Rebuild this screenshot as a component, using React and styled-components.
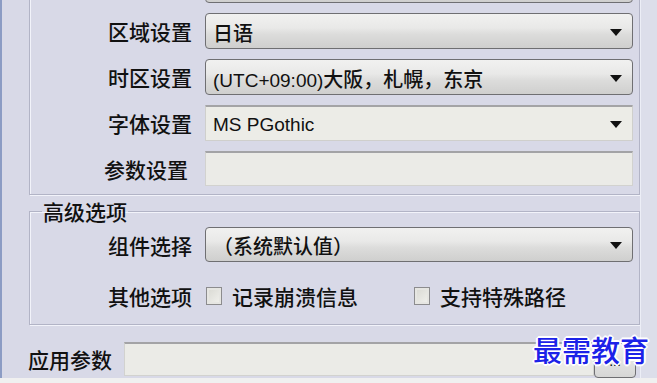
import styled, { createGlobalStyle } from "styled-components";

const GlobalStyle = createGlobalStyle`
    html, body {
        margin: 0;
        padding: 0;
        background: #f0f0f0;
        overflow: hidden;
    }
`;

const FONT = `"Noto Sans CJK SC", "Liberation Sans", sans-serif`;

const Window = styled.div`
    width: 657px;
    height: 378px;
    box-sizing: border-box;
    border-left: 2px solid #8c9cc4;
    background-color: #d8d9e7;
    display: flex;
    overflow: hidden;
    position: relative;
    font-family: ${FONT};
    color: #111;
`;

const Panel = styled.div`
    flex: 0 0 638px;
    padding-left: 27px;
    box-sizing: border-box;
    display: flex;
    flex-direction: column;
`;

const SideStrip = styled.div`
    flex: 1;
    background-color: #dcdeea;
    border-left: 1px solid #eceef6;
`;

const Group = styled.div`
    width: 611px;
    box-sizing: border-box;
    margin-top: -44px;
    padding: 10px 0 8px 0;
    border: 1px solid #b2b4c6;
    box-shadow: inset 1px 1px 0 #f2f3fa, 1px 1px 0 #f2f3fa;
    display: grid;
    grid-template-columns: 162px 428px;
    column-gap: 13px;
    row-gap: 10px;
`;

const Fieldset = styled.fieldset`
    width: 611px;
    box-sizing: border-box;
    margin: 4px 0 0 0;
    padding: 4px 0 10px 0;
    border: 1px solid #b2b4c6;
    box-shadow: inset 1px 1px 0 #f2f3fa, 1px 1px 0 #f2f3fa;
    display: grid;
    grid-template-columns: 162px 428px;
    column-gap: 13px;
    row-gap: 16px;
    min-inline-size: 0;
`;

const Legend = styled.legend`
    margin-left: 12px;
    padding: 0 1px;
    font-size: 21px;
    font-weight: 500;
    line-height: 24px;
`;

const Label = styled.div`
    font-size: 21px;
    font-weight: 500;
    text-align: right;
    align-self: center;
    white-space: nowrap;
    padding-right: ${(p) => p.$shift || 0}px;
`;

const Combo = styled.div`
    height: ${(p) => p.$h || 36}px;
    box-sizing: border-box;
    display: flex;
    align-items: center;
    justify-content: space-between;
    padding: 2px 10px 0 7px;
    font-size: 20px;
    font-weight: 500;
    white-space: nowrap;
    border-radius: ${(p) => (p.$flat ? "1px" : "4px")};
    border: 1px solid ${(p) => (p.$flat ? "#cfcfcc" : "#6f6f72")};
    border-top: ${(p) => (p.$flat ? "2px solid #a4a4a6" : "1px solid #6f6f72")};
    background: ${(p) =>
        p.$flat
            ? "#ecece7"
            : "linear-gradient(#f1f1f0 0%, #e9e9e8 40%, #dcdcdb 60%, #cfcfce 100%)"};
`;

const Latin = styled.span`
    font-family: "Liberation Sans", sans-serif;
    font-size: 19px;
    font-weight: 400;
`;

const Arrow = styled.span`
    width: 0;
    height: 0;
    border-left: 6px solid transparent;
    border-right: 6px solid transparent;
    border-top: 7px solid #111;
    flex: none;
    margin-left: auto;
`;

const TextBox = styled.div`
    height: ${(p) => p.$h || 35}px;
    width: ${(p) => (p.$w ? `${p.$w}px` : "auto")};
    box-sizing: border-box;
    background: #ebebe7;
    border: 1px solid #d2d2cf;
    border-top: 2px solid #a3a3a6;
`;

const CheckRow = styled.div`
    display: flex;
    align-items: center;
    gap: 56px;
    height: 36px;
    padding-left: 1px;
`;

const CheckItem = styled.label`
    display: flex;
    align-items: center;
    gap: 10px;
    font-size: 21px;
    font-weight: 500;
`;

const Box = styled.span`
    width: 16px;
    height: 18px;
    box-sizing: border-box;
    border: 1px solid #8c8c8e;
    background: linear-gradient(135deg, #d8d8d2, #f2f2ee);
    box-shadow: inset 0 0 0 2px #e6e6e2;
`;

const BottomRow = styled.div`
    display: flex;
    align-items: center;
    margin-top: 14px;
`;

const BottomLabel = styled.div`
    width: 96px;
    margin-left: -1px;
    font-size: 21px;
    font-weight: 500;
    white-space: nowrap;
`;

const DotsButton = styled.button`
    width: 42px;
    height: 35px;
    margin-top: 4px;
    border: 1px solid #6f6f72;
    border-radius: 4px;
    background: linear-gradient(#f0f0ef, #d6d6d5);
    font-family: "Liberation Sans", sans-serif;
    font-size: 14px;
    padding: 0;
`;

const Watermark = styled.div`
    position: absolute;
    right: 8px;
    bottom: 8px;
    font-family: ${FONT};
    font-size: 29px;
    font-weight: 500;
    color: #1c22e8;
    text-shadow: 2px 0 0 #fff, -2px 0 0 #fff, 0 2px 0 #fff, 0 -2px 0 #fff,
        1px 1px 0 #fff, -1px -1px 0 #fff, 1px -1px 0 #fff, -1px 1px 0 #fff;
`;

function App() {
    return (
        <>
            <GlobalStyle />
            <Window>
                <Panel>
                    <Group>
                        <Label />
                        <Combo>
                            <Arrow />
                        </Combo>
                        <Label>区域设置</Label>
                        <Combo>
                            <span>日语</span>
                            <Arrow />
                        </Combo>
                        <Label>时区设置</Label>
                        <Combo>
                            <span>
                                <Latin>(UTC+09:00)</Latin>大阪，札幌，东京
                            </span>
                            <Arrow />
                        </Combo>
                        <Label>字体设置</Label>
                        <Combo $flat>
                            <Latin>MS PGothic</Latin>
                            <Arrow />
                        </Combo>
                        <Label $shift={4}>参数设置</Label>
                        <TextBox />
                    </Group>
                    <Fieldset>
                        <Legend>高级选项</Legend>
                        <Label>组件选择</Label>
                        <Combo $h={35}>
                            <span>（系统默认值）</span>
                            <Arrow />
                        </Combo>
                        <Label>其他选项</Label>
                        <CheckRow>
                            <CheckItem>
                                <Box />
                                记录崩溃信息
                            </CheckItem>
                            <CheckItem>
                                <Box />
                                支持特殊路径
                            </CheckItem>
                        </CheckRow>
                    </Fieldset>
                    <BottomRow>
                        <BottomLabel>应用参数</BottomLabel>
                        <TextBox $w={470} $h={34} />
                        <DotsButton>...</DotsButton>
                    </BottomRow>
                </Panel>
                <SideStrip />
                <Watermark>最需教育</Watermark>
            </Window>
        </>
    );
}

export default App;
